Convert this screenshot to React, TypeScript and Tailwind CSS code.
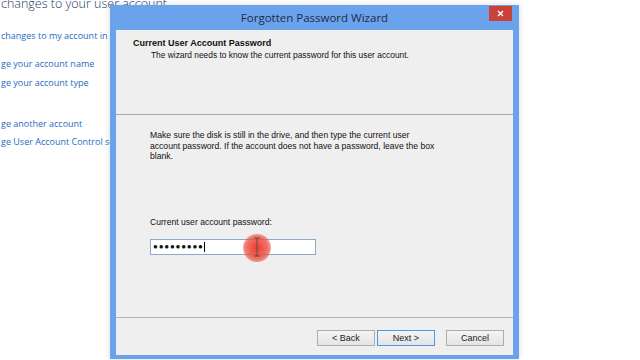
import React from "react";

const links = [
  { text: "changes to my account in", top: "mt-[16px]" },
  { text: "ge your account name", top: "mt-[16px]" },
  { text: "ge your account type", top: "mt-[7px]" },
  { text: "ge another account", top: "mt-[29px]" },
  { text: "ge User Account Control se", top: "mt-[6px]" },
];

const WizardButton = ({
  label,
  primary,
  className = "",
}: {
  label: string;
  primary?: boolean;
  className?: string;
}) => (
  <button
    className={`block h-[16px] w-[58px] border bg-gradient-to-b from-[#f4f4f4] to-[#e4e4e4] text-[9px] leading-none text-[#222] ${
      primary ? "border-[#4a9ae6]" : "border-[#adadad]"
    } ${className}`}
  >
    {label}
  </button>
);

const App = () => {
  return (
    <div className="relative h-[360px] w-[640px] overflow-hidden bg-white font-['Open_Sans',sans-serif]">
      {/* Control panel behind the dialog */}
      <div className="flex flex-col pl-[1px]">
        <h1 className="-mt-[6px] whitespace-nowrap text-[12.5px] font-light leading-[20px] text-[#1e3964]">
          changes to your user account
        </h1>
        {links.map((l) => (
          <p
            key={l.text}
            className={`${l.top} whitespace-nowrap text-[9px] leading-[12px] text-[#1f6bbf]`}
          >
            {l.text}
          </p>
        ))}
      </div>

      {/* Wizard window */}
      <div className="absolute left-[110px] top-[5px] flex h-[354px] w-[409px] flex-col bg-[#6aa3ec] shadow-[0_0_6px_rgba(0,0,0,0.15)]">
        {/* Title bar */}
        <div className="relative flex h-[25px] shrink-0 items-center justify-center">
          <span className="text-[11.5px] text-[#1d2c4a]">Forgotten Password Wizard</span>
          <button className="absolute right-[7px] top-[1px] flex h-[15px] w-[23px] items-center justify-center bg-[#c8423a]">
            <svg width="7" height="7" viewBox="0 0 7 7">
              <path d="M1 1 L6 6 M6 1 L1 6" stroke="#fff" strokeWidth="1.4" />
            </svg>
          </button>
        </div>

        {/* Client area */}
        <div className="mx-[6px] mb-[4px] flex flex-1 flex-col bg-[#efefef] font-['Liberation_Sans',Arial,sans-serif] text-[#111]">
          <div className="h-[85px] shrink-0 border-b border-[#a9a9a9] pl-[17px] pt-[8px]">
            <p className="text-[9px] font-bold leading-[11px]">Current User Account Password</p>
            <p className="pl-[18px] pt-[1px] text-[8.4px] leading-[11px]">
              The wizard needs to know the current password for this user account.
            </p>
          </div>

          <div className="flex flex-1 flex-col border-b border-[#b5b5b5] pl-[34px] pt-[15px]">
            <p className="text-[8.6px] leading-[10.5px]">
              Make sure the disk is still in the drive, and then type the current user
              <br />
              account password. If the account does not have a password, leave the box
              <br />
              blank.
            </p>
            <p className="mt-[55px] text-[8.6px] leading-[10px]">Current user account password:</p>
            <div className="relative mt-[12px] flex h-[16px] w-[166px] items-center border border-[#8fa8c8] bg-white pl-[2px]">
              <span className="text-[8px] leading-none tracking-[0.8px]">●●●●●●●●●</span>
              <span className="h-[10px] w-px bg-black" />
              {/* click highlight + I-beam */}
              <div className="absolute left-[92px] top-[-6px] h-[28px] w-[28px] rounded-full bg-[radial-gradient(circle,rgba(232,50,38,0.95)_0%,rgba(238,80,65,0.8)_55%,rgba(245,120,110,0)_100%)]" />
              <svg className="absolute left-[102px] top-[-3px]" width="8" height="20" viewBox="0 0 8 20">
                <path d="M1 1 H7 M4 1 V19 M1 19 H7" stroke="#6a4a3a" strokeWidth="1" fill="none" />
              </svg>
            </div>
          </div>

          <div className="flex h-[37px] shrink-0 items-start justify-end gap-[2px] pr-[9px] pt-[12px]">
            <WizardButton label="< Back" />
            <WizardButton label="Next >" primary />
            <WizardButton label="Cancel" className="ml-[9px]" />
          </div>
        </div>
      </div>
    </div>
  );
};

export default App;
